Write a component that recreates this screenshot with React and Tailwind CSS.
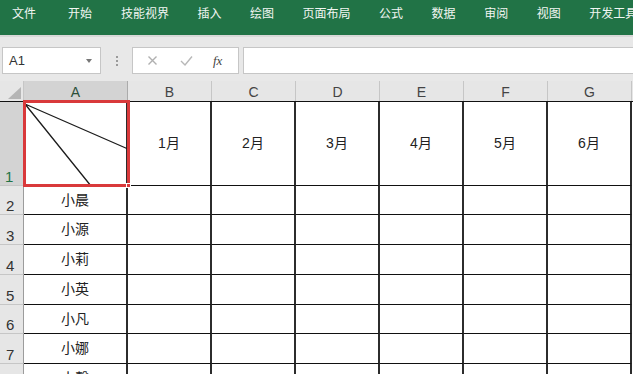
import React from "react";

const tabs = ["文件", "开始", "技能视界", "插入", "绘图", "页面布局", "公式", "数据", "审阅", "视图", "开发工具"];
const cols = ["B", "C", "D", "E", "F", "G"];
const months = ["1月", "2月", "3月", "4月", "5月", "6月"];
const names = ["小晨", "小源", "小莉", "小英", "小凡", "小娜", "小馨"];
const rowHeights = ["h-[29px]", "h-[30px]", "h-[30px]", "h-[30px]", "h-[29px]", "h-[30px]", "h-[30px]"];

const font = { fontFamily: '"Liberation Sans", "Noto Sans CJK SC", sans-serif' };

const Ribbon = () => (
  <div className="h-[35px] bg-[#217346] flex items-start pt-[7px] pl-[12px] text-[12px] leading-[14px] text-[#f1f6f2] whitespace-nowrap">
    {tabs.map((t, i) => (
      <span key={t} className={i === 0 ? "mr-[32px]" : i === 1 ? "mr-[29px]" : "mr-[28.5px]"}>
        {t}
      </span>
    ))}
  </div>
);

const FormulaBar = () => (
  <div className="h-[46px] bg-[#e8e8e8] border-t-[2px] border-[#d8d8d8] flex items-start pt-[10px]">
    <div className="ml-[2px] w-[99px] h-[27px] bg-white border border-[#c6c6c6] flex items-center justify-between pl-[6px] pr-[8px]">
      <span className="text-[13px] text-[#333]">A1</span>
      <span className="w-0 h-0 border-l-[3.5px] border-r-[3.5px] border-t-[4px] border-l-transparent border-r-transparent border-t-[#777]" />
    </div>
    <div className="w-[31px] h-[27px] flex flex-col items-center justify-center gap-[2px]">
      <span className="w-[2px] h-[2px] bg-[#9a9a9a]" />
      <span className="w-[2px] h-[2px] bg-[#9a9a9a]" />
      <span className="w-[2px] h-[2px] bg-[#9a9a9a]" />
    </div>
    <div className="w-[107px] h-[27px] bg-white border border-[#c6c6c6] flex items-center pl-[12px]">
      <svg width="11" height="11" viewBox="0 0 11 11" className="ml-[2px]">
        <path d="M1.5 1.5 L9.5 9.5 M9.5 1.5 L1.5 9.5" stroke="#b0b0b0" strokeWidth="1.4" />
      </svg>
      <svg width="13" height="11" viewBox="0 0 13 11" className="ml-[22px]">
        <path d="M1 6 L5 10 L12 1.5" stroke="#b8b8b8" strokeWidth="1.4" fill="none" />
      </svg>
      <span className="ml-[20px] text-[13px] italic text-[#444]" style={{ fontFamily: '"Liberation Serif", serif' }}>
        fx
      </span>
    </div>
    <div className="ml-[4px] flex-1 h-[27px] bg-white border border-r-0 border-[#c6c6c6]" />
  </div>
);

const HeaderRow = () => (
  <div className="flex h-[20px] bg-[#e6e6e6]">
    <div className="w-[24px] h-full relative border-r border-[#c6c6c6]">
      <svg width="13" height="12" viewBox="0 0 13 12" className="absolute right-[2px] bottom-[2px]">
        <path d="M13 0 L13 12 L0 12 Z" fill="#b5b5b5" />
      </svg>
    </div>
    <div className="w-[104px] h-full bg-[#d3d3d3] border-r border-[#ababab] flex items-end justify-center pb-[1px] text-[14px] leading-[16px] text-[#2c4f3a]">
      A
    </div>
    {cols.map((c) => (
      <div key={c} className="w-[84px] h-full border-r border-[#c6c6c6] flex items-end justify-center pb-[1px] text-[14px] leading-[16px] text-[#444]">
        {c}
      </div>
    ))}
  </div>
);

const App = () => {
  return (
    <div className="w-[633px] h-[374px] overflow-hidden bg-white" style={font}>
      <Ribbon />
      <FormulaBar />
      <HeaderRow />
      <div className="relative">
        <div className="flex h-[85px] border-t border-[#111]">
          <div className="w-[24px] h-full bg-[#d3d3d3] border-r border-[#9c9c9c] border-b border-b-[#c6c6c6] flex items-end pl-[5px] pb-[1px] text-[15px] leading-[15px] text-[#217346]">
            1
          </div>
          <div className="w-[104px] h-full border-r-2 border-[#2c2c2c] border-b border-b-[#111]" />
          {months.map((m) => (
            <div key={m} className="w-[84px] h-full border-r-2 border-[#2c2c2c] border-b border-b-[#111] flex items-center justify-center text-[14px] text-[#222]">
              {m}
            </div>
          ))}
        </div>
        {names.map((n, i) => (
          <div key={n} className={`flex ${rowHeights[i]}`}>
            <div className="w-[24px] h-full bg-[#e6e6e6] border-r border-[#9c9c9c] border-b border-b-[#c6c6c6] flex items-end pl-[6px] pb-[1px] text-[15px] leading-[15px] text-[#333]">
              {i + 2}
            </div>
            <div className="w-[104px] h-full border-r-2 border-[#2c2c2c] border-b border-b-[#111] flex items-center justify-center text-[14px] text-[#222]">
              {n}
            </div>
            {cols.map((c) => (
              <div key={c} className="w-[84px] h-full border-r-2 border-[#2c2c2c] border-b border-b-[#111]" />
            ))}
          </div>
        ))}
        <svg width="108" height="88" viewBox="0 0 108 88" className="absolute left-[23px] top-[-1px]">
          <path d="M2 4 L105 49 M2 4 L68 86" stroke="#1c1c1c" strokeWidth="1.3" fill="none" />
        </svg>
        <div className="absolute left-[23px] top-[-1px] w-[107px] h-[87px] border-[3px] border-[#d9393b]" />
        <div className="absolute left-[126px] top-[82px] w-[5px] h-[5px] bg-[#d9393b] border border-white" />
      </div>
    </div>
  );
};

export default App;
